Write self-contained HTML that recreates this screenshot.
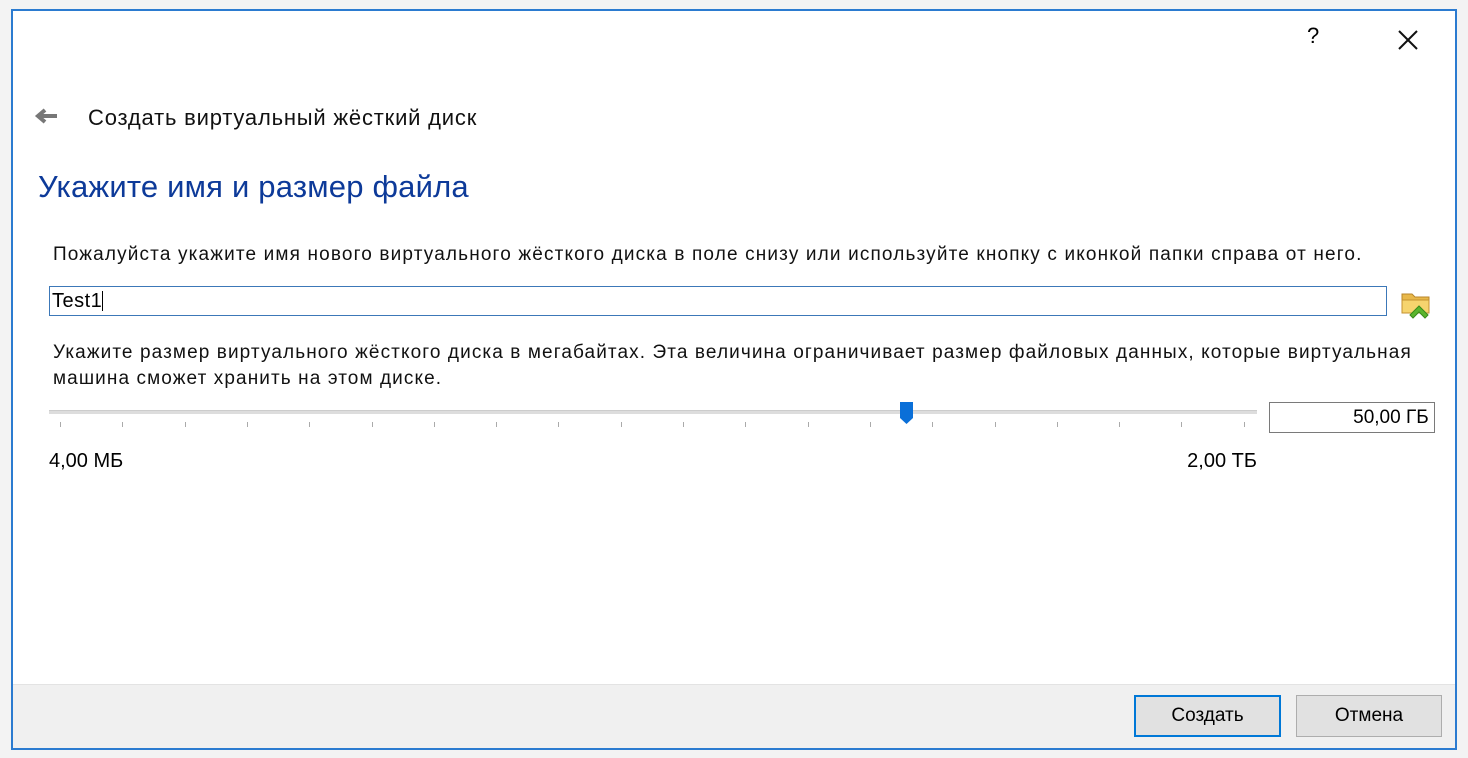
<!DOCTYPE html>
<html><head><meta charset="utf-8"><style>
body{margin:0;width:1468px;height:758px;background:#f3f3f3;position:relative;overflow:hidden;font-family:"Liberation Sans","DejaVu Sans",sans-serif;color:#000}
.win{position:absolute;left:11px;top:9px;width:1442px;height:737px;border:2px solid #2b7bd0;background:#fff}
.abs{position:absolute;white-space:nowrap}
.foot{position:absolute;left:0;right:0;bottom:0;height:63px;background:#f0f0f0;border-top:1px solid #e3e3e3}
.btn{position:absolute;top:10px;width:144px;height:40px;background:#e1e1e1;border:1px solid #adadad;font-size:19px;text-align:center;line-height:40px}
.tick{position:absolute;top:422px;width:1px;height:5px;background:#aaa}
</style></head><body>
<div class="win">
<div class="abs" style="left:1294px;top:12px;font-size:22px">?</div>
<svg class="abs" style="left:1384px;top:18px" width="22" height="22"><path d="M2 2L20 20M20 2L2 20" stroke="#111" stroke-width="2"/></svg>
<svg class="abs" style="left:20px;top:96px" width="26" height="18"><path d="M24 9H6M12 3L5 9L12 15" stroke="#777" stroke-width="4" fill="none"/></svg>
<div class="abs" style="left:75px;top:94px;font-size:22px;letter-spacing:0.8px;color:#111">Создать виртуальный жёсткий диск</div>
<div class="abs" style="left:25px;top:158px;font-size:31px;letter-spacing:0.2px;color:#0d3a99">Укажите имя и размер файла</div>
<div class="abs" style="left:40px;top:233px;font-size:19px;letter-spacing:1.15px;color:#111">Пожалуйста укажите имя нового виртуального жёсткого диска в поле снизу или используйте кнопку с иконкой папки справа от него.</div>
<div class="abs" style="left:36px;top:275px;width:1334px;height:28px;border:1px solid #3c78b8;font-size:20px;letter-spacing:0.5px;line-height:28px;padding-left:2px">Test1<span style="display:inline-block;width:1px;height:20px;background:#000;vertical-align:-4px"></span></div>
<svg class="abs" style="left:1387px;top:277px" width="34" height="32"><path d="M2 6h10l3 3h14v16H2z" fill="#e8b84a" stroke="#b8862a"/><path d="M2 12h27v13H2z" fill="#f6d46e" stroke="#c49230"/><path d="M10 27l9-9 9 9-3 3-6-6-6 6z" fill="#5bb52d" stroke="#3a8a1a"/></svg>
<div class="abs" style="left:40px;top:329px;font-size:19px;letter-spacing:1.1px;line-height:26px;color:#111">Укажите размер виртуального жёсткого диска в мегабайтах. Эта величина ограничивает размер файловых данных, которые виртуальная<br>машина сможет хранить на этом диске.</div>
<div class="abs" style="left:36px;top:399px;width:1208px;height:3px;background:#ddd;border-top:1px solid #ccc"></div>
<svg class="abs" style="left:887px;top:391px" width="13" height="22"><path d="M0 0h13v16l-6.5 6L0 16z" fill="#0a6fd8"/></svg>
<div class="abs" style="left:1256px;top:391px;width:164px;height:29px;border:1px solid #7a7a7a;font-size:19px;line-height:29px;text-align:right">50,00 ГБ&nbsp;</div>
<div class="abs" style="left:36px;top:439px;font-size:20px">4,00 МБ</div>
<div class="abs" style="left:1100px;width:144px;text-align:right;top:439px;font-size:20px">2,00 ТБ</div>
<div class="foot">
<div class="btn" style="left:1121px;border:2px solid #0078d7;width:143px;height:38px;line-height:38px">Создать</div>
<div class="btn" style="left:1283px">Отмена</div>
</div>
</div>
<script>
for(let i=0;i<20;i++){let d=document.createElement('div');d.className='tick';d.style.left=(60+i*62.3)+'px';document.body.appendChild(d);}
</script>
</body></html>
